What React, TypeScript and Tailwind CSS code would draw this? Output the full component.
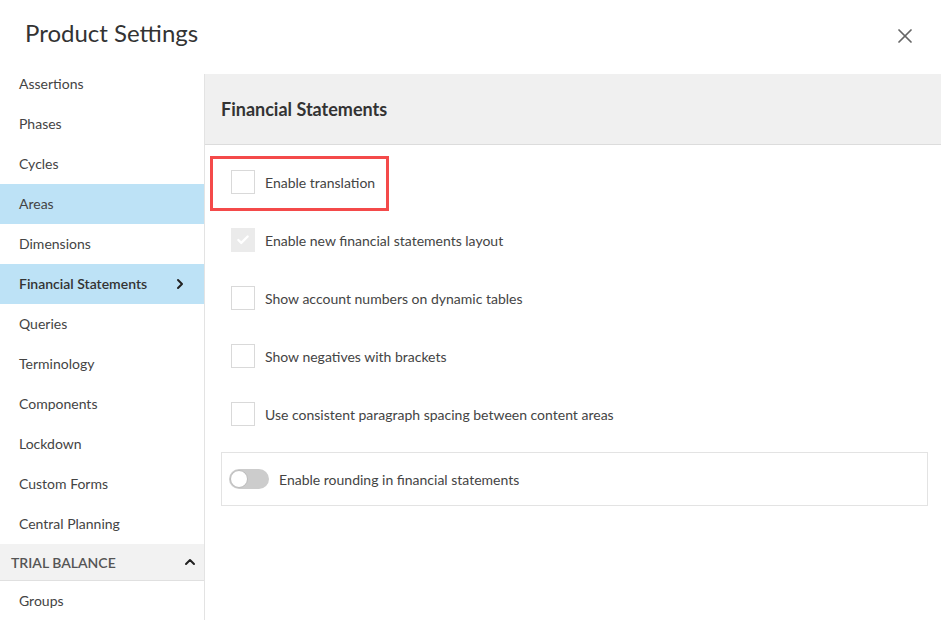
import { X, ChevronRight, ChevronUp, Check } from 'lucide-react';

const NAV = [
  'Assertions',
  'Phases',
  'Cycles',
  'Areas',
  'Dimensions',
  'Financial Statements',
  'Queries',
  'Terminology',
  'Components',
  'Lockdown',
  'Custom Forms',
  'Central Planning',
];

const OPTIONS = [
  { label: 'Enable translation', checked: false, disabled: false },
  { label: 'Enable new financial statements layout', checked: true, disabled: true },
  { label: 'Show account numbers on dynamic tables', checked: false, disabled: false },
  { label: 'Show negatives with brackets', checked: false, disabled: false },
  { label: 'Use consistent paragraph spacing between content areas', checked: false, disabled: false },
];

function Box({ checked, disabled }: { checked: boolean; disabled: boolean }) {
  return (
    <span
      className={`flex h-6 w-6 shrink-0 items-center justify-center border ${
        disabled ? 'border-[#ebebeb] bg-[#ebebeb]' : 'border-[#d9d9d9] bg-white'
      }`}
    >
      {checked && <Check className="h-3.5 w-3.5 text-white" strokeWidth={4} />}
    </span>
  );
}

export default function App() {
  return (
    <div className="h-[620px] w-[941px] overflow-hidden bg-white font-['Lato','Liberation_Sans',sans-serif] text-[#444]">
      <div className="flex h-[64px] items-center justify-between pl-[25px] pr-[24px]">
        <h1 className="mt-[1px] text-[24px] text-[#333]">Product Settings</h1>
        <X className="mt-2 h-6 w-6 text-[#666]" strokeWidth={1.75} />
      </div>

      <div className="flex">
        <nav className="w-[204px] shrink-0">
          {NAV.map((n) => {
            const active = n === 'Areas' || n === 'Financial Statements';
            const bold = n === 'Financial Statements';
            return (
              <div
                key={n}
                className={`flex h-10 items-center justify-between pl-[19px] pr-[16px] text-[14px] ${
                  active ? 'bg-[#bde2f6]' : ''
                } ${bold ? 'font-semibold text-[#333]' : ''}`}
              >
                <span className="-mt-[2px]">{n}</span>
                {bold && <ChevronRight className="h-4 w-4 text-[#222]" strokeWidth={3} />}
              </div>
            );
          })}
          <div className="flex h-[37px] items-center justify-between border-b border-[#e0e0e0] bg-[#f2f2f2] pl-[11px] pr-[6px] text-[14px] font-semibold text-[#555]">
            <span>TRIAL BALANCE</span>
            <ChevronUp className="h-4 w-4 text-[#222]" strokeWidth={3} />
          </div>
          <div className="flex h-10 items-center pl-[19px] text-[14px]">
            <span className="-mt-[2px]">Groups</span>
          </div>
        </nav>

        <main className="mt-[10px] flex-1 border-l border-[#e3e3e3]">
          <div className="flex h-[71px] items-center border-b border-[#dcdcdc] bg-[#f0f0f0] pl-4 text-[18px] font-bold text-[#333]">
            Financial Statements
          </div>

          <div className="px-4 pt-[8px]">
            {OPTIONS.map((o, i) => (
              <div
                key={o.label}
                className={`flex h-[58px] items-center gap-[10px] pl-[10px] text-[14px] ${
                  i === 0 ? 'relative' : ''
                }`}
              >
                {i === 0 && (
                  <span className="pointer-events-none absolute left-[-11px] top-[3px] h-[55px] w-[179px] border-[3px] border-[#f44a4a]" />
                )}
                <Box checked={o.checked} disabled={o.disabled} />
                <span>{o.label}</span>
              </div>
            ))}

            <div className="mt-[9px] mr-[-3px] flex h-[54px] items-center gap-[10px] border border-[#e3e3e3] pl-[7px] text-[14px]">
              <span className="relative h-5 w-10 shrink-0 rounded-full bg-[#cccccc]">
                <span className="absolute left-[1px] top-[1px] h-[18px] w-[18px] rounded-full border border-[#bbb] bg-white" />
              </span>
              <span>Enable rounding in financial statements</span>
            </div>
          </div>
        </main>
      </div>
    </div>
  );
}
